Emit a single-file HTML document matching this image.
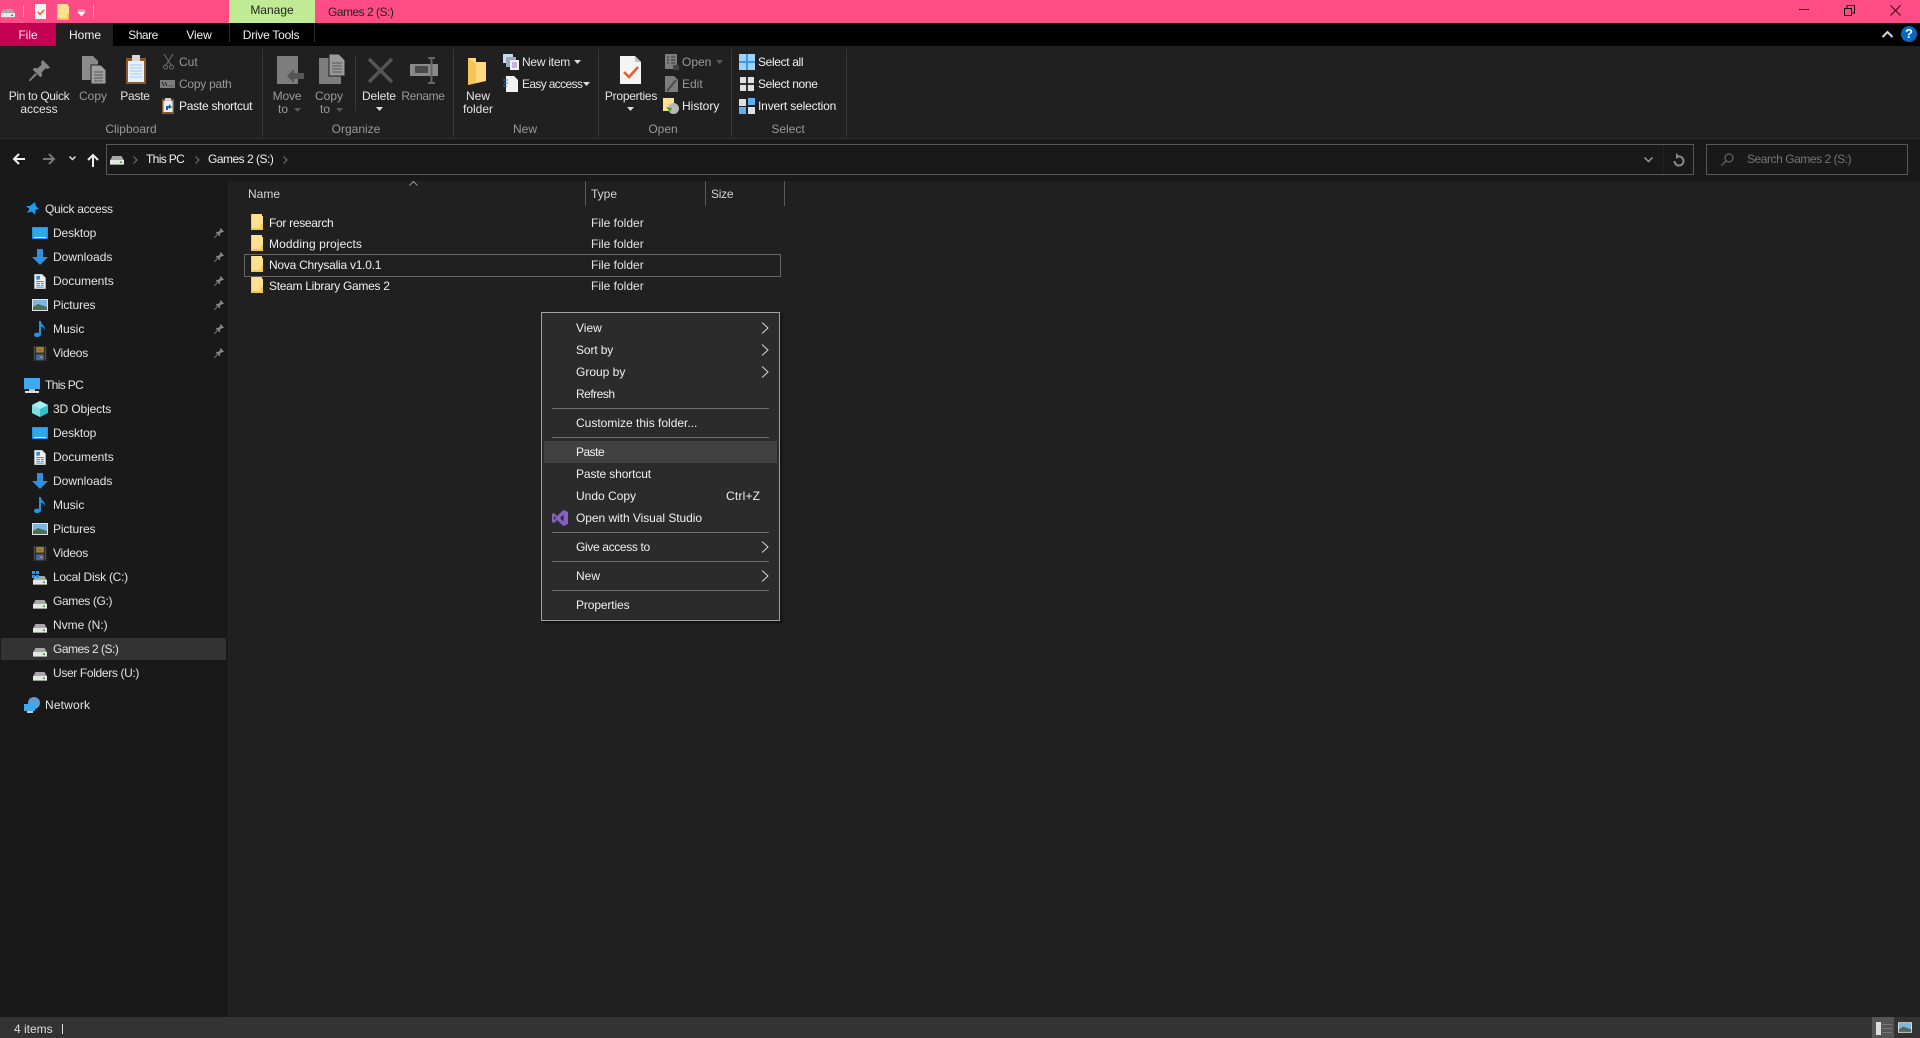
<!DOCTYPE html>
<html><head><meta charset="utf-8"><title>Games 2 (S:)</title>
<style>
html,body{margin:0;padding:0;width:1920px;height:1038px;overflow:hidden;background:#202020}
body{position:relative;font:12px/16px "Liberation Sans",sans-serif;color:#e4e4e4}
.b{position:absolute}
.t{position:absolute;white-space:nowrap;line-height:16px;height:16px}
.c{transform:translateX(-50%)}
.d{color:#9a9a9a}
.w{color:#f0f0f0}
.g{color:#999}
.a{letter-spacing:-.12px}
.e{letter-spacing:-.25px}
.f{letter-spacing:-.35px}
.h{letter-spacing:-.5px}
.i{letter-spacing:-.65px}
svg{position:absolute;overflow:visible}
</style></head><body>
<svg width="0" height="0" style="position:absolute">
<symbol id="drive" viewBox="0 0 14 9"><path d="M2.5 0H11.5L14 4.5H0z" fill="#a8a8a8"/><rect y="4" width="14" height="5" fill="#e6e6e6"/><rect y="8" width="14" height="1" fill="#9a9a9a"/><rect x="10" y="5.500" width="2" height="1.500" fill="#3c9a3c"/></symbol>
<symbol id="folder" viewBox="0 0 12 16"><path d="M0 0H11V2H12V16H0z" fill="#ffe08e"/><path d="M0 14H12V16H0zM0 0H1V16H0z" fill="#f3c851"/><path d="M10 10H12V16H10z" fill="#f3c851"/></symbol>
<symbol id="pin" viewBox="0 0 20 20"><path d="M13 0L20 7L18 8.500L15.500 8L12 12L12.500 15L11 16.500L3.500 9L5 7.500L8 8L12 4.500L11.500 2zM6 12.500L7.500 14L1 20L0 20L0 19z" fill="#858585"/></symbol>
<symbol id="desk" viewBox="0 0 16 12"><rect width="16" height="12" fill="#1e90e8"/><rect x="1" y="1" width="14" height="9" fill="#2ea5f5"/><rect x="2" y="10" width="12" height="1" fill="#d0ecff"/></symbol>
<symbol id="down" viewBox="0 0 16 16"><path d="M5 0H11V8H16L8 16L0 8H5z" fill="#2f8fe0"/></symbol>
<symbol id="doc" viewBox="0 0 12 16"><path d="M0 0H8L12 4V16H0z" fill="#f2f2f2"/><path d="M0 0H8L12 4V16H0z" fill="none" stroke="#8a8a8a" stroke-width=".8"/><rect x="2" y="2" width="4" height="4" fill="#3a8dd8"/><path d="M2 8H10M2 10H6M7 10H10M2 12H6M7 12H10M2 14H10" stroke="#3a8dd8"/></symbol>
<symbol id="pic" viewBox="0 0 16 12"><rect width="16" height="12" fill="#e4e4e4"/><rect x="1" y="1" width="14" height="10" fill="#7fb4de"/><path d="M1 8L6 5L15 8V11H1z" fill="#4a6e58"/></symbol>
<symbol id="music" viewBox="0 0 12 16"><path d="M5 0H7C7 4 12 5 11 9C10 6 8.500 6 7 5.500V13C7 15 5 16 3 16C1 16 0 15 0 14C0 12 3 11 5 12z" fill="#1e96e8"/></symbol>
<symbol id="video" viewBox="0 0 14 16"><rect width="14" height="16" fill="#2e2e2e"/><path d="M1 1V15M13 1V15" stroke="#777" stroke-dasharray="1 1"/><rect x="3" y="1" width="8" height="6" fill="#9a8a30"/><rect x="3" y="9" width="8" height="6" fill="#3f68b8"/><rect x="5" y="3" width="3" height="2" fill="#d04030"/><rect x="7" y="11" width="3" height="2" fill="#d08030"/></symbol>
<symbol id="chev" viewBox="0 0 8 12"><path d="M1 .5L7 6L1 11.500" fill="none" stroke="#d8d8d8"/></symbol>
<symbol id="arrowsm" viewBox="0 0 7 4"><path d="M0 0H7L3.500 4z" fill="currentColor"/></symbol>
<symbol id="sel" viewBox="0 0 16 16"><rect width="7" height="7"/><rect x="9" width="7" height="7"/><rect y="9" width="7" height="7"/><rect x="9" y="9" width="7" height="7"/></symbol>
</svg>

<!-- Title bar -->
<div class="b" style="left:0;top:0;width:1920px;height:23px;background:#ff4b86"></div>
<div class="b" style="left:229px;top:0;width:86px;height:23px;background:#c1ea94"></div>
<div class="t c" style="left:272px;top:2px;color:#222">Manage</div>
<div class="t h" style="left:328px;top:4px;color:#222">Games 2 (S:)</div>
<svg style="left:1px;top:9px" width="14" height="9"><use href="#drive"/></svg>
<div class="b" style="left:23px;top:5px;width:1px;height:12px;background:#ffa0c0"></div>
<div class="b" style="left:35px;top:4px;width:11px;height:15px;background:#f4f4f4"></div>
<svg style="left:37px;top:8px" width="8" height="8"><path d="M1 4L3 6.500L7 2" fill="none" stroke="#f05a1e" stroke-width="1.500"/></svg>
<svg style="left:57px;top:4px" width="12" height="16"><use href="#folder"/></svg>
<svg style="left:78px;top:10px" width="8" height="7"><path d="M0 0H7M0 2H7L3.500 6z" fill="#fff" stroke="#fff" stroke-width=".7"/></svg>
<div class="b" style="left:93px;top:5px;width:1px;height:12px;background:#ffa0c0"></div>
<svg style="left:1799px;top:9px" width="10" height="2"><rect width="10" height="1" fill="#111"/></svg>
<svg style="left:1844px;top:5px" width="11" height="11"><path d="M.5 3.500H7.500V10.500H.5zM3 3V.5H10.500V8H8" fill="none" stroke="#111"/></svg>
<svg style="left:1890px;top:5px" width="11" height="11"><path d="M.5.5L10.500 10.500M10.500.5L.5 10.500" stroke="#111" fill="none"/></svg>

<!-- Tabs -->
<div class="b" style="left:0;top:23px;width:1920px;height:23px;background:#000"></div>
<div class="b" style="left:0;top:23px;width:56px;height:23px;background:#c40050"></div>
<div class="t c w" style="left:28px;top:27px">File</div>
<div class="b" style="left:56px;top:23px;width:57px;height:24px;background:#202020"></div>
<div class="t c w" style="left:85px;top:27px">Home</div>
<div class="t c w h" style="left:143px;top:27px">Share</div>
<div class="t c w a" style="left:199px;top:27px">View</div>
<div class="t c w e" style="left:271px;top:27px">Drive Tools</div>
<div class="b" style="left:229px;top:23px;width:1px;height:19px;background:#2a2a2a"></div>
<div class="b" style="left:314px;top:23px;width:1px;height:19px;background:#2a2a2a"></div>
<svg style="left:1882px;top:31px" width="11" height="7"><path d="M.5 6L5.500 1L10.500 6" fill="none" stroke="#d8d8d8" stroke-width="2"/></svg>
<div class="b" style="left:1901px;top:26px;width:16px;height:16px;border-radius:50%;background:#0a68c4"></div>
<div class="t c" style="left:1909px;top:26px;color:#fff;font-weight:bold;font-size:13px">?</div>

<!-- Ribbon -->
<div class="b" style="left:0;top:46px;width:1920px;height:92px;background:#202020"></div>
<div class="b" style="left:0;top:138px;width:1920px;height:1px;background:#2e2e2e"></div>
<div class="b" style="left:262px;top:49px;width:1px;height:88px;background:#383838"></div>
<div class="b" style="left:453px;top:49px;width:1px;height:88px;background:#383838"></div>
<div class="b" style="left:598px;top:49px;width:1px;height:88px;background:#383838"></div>
<div class="b" style="left:731px;top:49px;width:1px;height:88px;background:#383838"></div>
<div class="b" style="left:846px;top:49px;width:1px;height:88px;background:#383838"></div>
<div class="b" style="left:355px;top:56px;width:1px;height:55px;background:#383838"></div>

<svg style="left:29px;top:60px" width="21" height="21"><use href="#pin"/></svg>
<div class="t c f" style="left:39px;top:88px">Pin to Quick</div><div class="t c" style="left:39px;top:101px">access</div>
<svg style="left:82px;top:56px" width="25" height="28"><path d="M0 0H11L16 5V24H0z" fill="#8a8a8a"/><path d="M9 9H19L24 14V28H9z" fill="#a0a0a0" stroke="#202020"/><path d="M12 16H21M12 19H21M12 22H21M12 25H21" stroke="#555"/></svg>
<div class="t c d" style="left:93px;top:88px">Copy</div>
<svg style="left:126px;top:55px" width="20" height="29"><rect y="3" width="20" height="26" fill="#8a5a30"/><rect x="2" y="6" width="16" height="21" fill="#e8f0fa"/><path d="M4 10H16M4 13H16M4 16H16M4 19H16M4 22H16" stroke="#a8c8e8"/><rect x="6" y="0" width="8" height="6" fill="#d8d8d8"/></svg>
<div class="t c e" style="left:135px;top:88px">Paste</div>
<svg style="left:163px;top:54px" width="11" height="16"><path d="M1 0L8 11M10 0L3 11" stroke="#707070" fill="none"/><circle cx="2.500" cy="13" r="2" fill="none" stroke="#707070"/><circle cx="8.500" cy="13" r="2" fill="none" stroke="#707070"/></svg>
<div class="t d" style="left:179px;top:54px">Cut</div>
<svg style="left:160px;top:80px" width="15" height="8"><rect width="15" height="8" fill="#7d7d7d"/><path d="M2 2L4 6M5 2L7 6M9 6H10M11.500 6H12.500" stroke="#222"/></svg>
<div class="t d e" style="left:179px;top:76px">Copy path</div>
<svg style="left:162px;top:98px" width="12" height="16"><rect y="1" width="12" height="15" rx="1" fill="#8a5a30"/><rect x="1.500" y="3" width="9" height="11" fill="#e8eef6"/><rect x="3" width="6" height="3" fill="#ccc"/><path d="M4 12V8H7V6L10 9L7 11V10H6V12z" fill="#1a5fb8"/></svg>
<div class="t w e" style="left:179px;top:98px">Paste shortcut</div>
<div class="t c g" style="left:131px;top:121px">Clipboard</div>

<svg style="left:277px;top:56px" width="27" height="28"><rect width="21" height="28" fill="#7d7d7d"/><path d="M10 20L17 13V17H27V23H17V27z" fill="#565656"/></svg>
<div class="t c d a" style="left:287px;top:88px">Move</div><div class="t d" style="left:278px;top:101px">to</div>
<svg style="left:294px;top:108px;color:#5a5a5a" width="7" height="4"><use href="#arrowsm"/></svg>
<svg style="left:319px;top:54px" width="27" height="30"><rect y="4" width="22" height="26" fill="#7d7d7d"/><path d="M10 0H20L26 6V22H10z" fill="#9a9a9a" stroke="#202020"/><path d="M13 9H23M13 12H23M13 15H23M13 18H23" stroke="#555"/></svg>
<div class="t c d" style="left:329px;top:88px">Copy</div><div class="t d" style="left:320px;top:101px">to</div>
<svg style="left:336px;top:108px;color:#5a5a5a" width="7" height="4"><use href="#arrowsm"/></svg>
<svg style="left:368px;top:58px" width="25" height="25"><path d="M1 1L24 24M24 1L1 24" stroke="#555" stroke-width="3.500"/></svg>
<div class="t c a" style="left:379px;top:88px">Delete</div>
<svg style="left:376px;top:107px;color:#ddd" width="7" height="4"><use href="#arrowsm"/></svg>
<svg style="left:410px;top:57px" width="28" height="27"><rect y="7" width="28" height="12" fill="#8a8a8a"/><rect x="5" y="9" width="13" height="7" fill="#4a4a4a"/><path d="M18 1H25M21.500 1V26M18 26H25" stroke="#666" stroke-width="2" fill="none"/></svg>
<div class="t c d f" style="left:423px;top:88px">Rename</div>
<div class="t c g" style="left:356px;top:121px">Organize</div>

<svg style="left:468px;top:58px" width="18" height="27"><path d="M0 0H8V4H18V23L0 27z" fill="#ffd880"/><path d="M0 0L8 6V24L0 27z" fill="#f5c452"/></svg>
<div class="t c" style="left:478px;top:88px">New</div><div class="t c" style="left:478px;top:101px">folder</div>
<svg style="left:503px;top:54px" width="16" height="16"><rect width="10" height="9" fill="#c8dcf0"/><rect x="3" y="3" width="10" height="10" fill="#9ab"/><rect x="7" y="6" width="9" height="10" fill="#f2f2f2"/><path d="M9 9H14M9 11H14M9 13H14" stroke="#a070c0"/></svg>
<div class="t e" style="left:522px;top:54px">New item</div>
<svg style="left:574px;top:60px;color:#ddd" width="7" height="4"><use href="#arrowsm"/></svg>
<svg style="left:503px;top:76px" width="15" height="16"><path d="M3 0H11L15 4V16H3z" fill="#f2f2f2"/><path d="M0 4H5M1 7H5M0 10H4" stroke="#2f7fd0"/></svg>
<div class="t i" style="left:522px;top:76px">Easy access</div>
<svg style="left:583px;top:82px;color:#ddd" width="7" height="4"><use href="#arrowsm"/></svg>
<div class="t c g" style="left:525px;top:121px">New</div>

<svg style="left:620px;top:56px" width="21" height="28"><path d="M0 0H15L21 6V28H0z" fill="#f4f4f4"/><path d="M15 0L21 6H15z" fill="#c0c0c0"/><path d="M4 16L9 21L18 11" fill="none" stroke="#f05a1e" stroke-width="2.500"/></svg>
<div class="t c e" style="left:631px;top:88px">Properties</div>
<svg style="left:627px;top:107px;color:#ddd" width="7" height="4"><use href="#arrowsm"/></svg>
<svg style="left:665px;top:54px" width="14" height="16"><rect width="12" height="15" fill="#7d7d7d"/><path d="M2 3H4M6 3H10M2 6H4M6 6H10M2 9H4M6 9H10" stroke="#333"/><path d="M8 11H14V16H8z" fill="#444"/></svg>
<div class="t d" style="left:682px;top:54px">Open</div>
<svg style="left:716px;top:60px;color:#5a5a5a" width="7" height="4"><use href="#arrowsm"/></svg>
<svg style="left:665px;top:76px" width="13" height="16"><path d="M0 0H9L13 4V16H0z" fill="#7d7d7d"/><path d="M2 15L11 4" stroke="#4a4a4a" stroke-width="2"/></svg>
<div class="t d" style="left:682px;top:76px">Edit</div>
<svg style="left:663px;top:98px" width="16" height="16"><rect width="11" height="13" fill="#ffe08e"/><circle cx="10.500" cy="10.500" r="5.500" fill="#b8b8b8"/><path d="M3 9L7 14L9 10z" fill="#38a038"/></svg>
<div class="t w" style="left:682px;top:98px">History</div>
<div class="t c g" style="left:663px;top:121px">Open</div>

<svg style="left:739px;top:54px;fill:#9ed2f8" width="16" height="16"><rect width="16" height="16" fill="#3c9be8"/><use href="#sel"/></svg>
<div class="t w f" style="left:758px;top:54px">Select all</div>
<svg style="left:740px;top:77px;fill:#e0e0e0" width="14" height="14"><use href="#sel"/></svg>
<div class="t w f" style="left:758px;top:76px">Select none</div>
<svg style="left:739px;top:98px" width="16" height="16"><rect x="0" y="1" width="7" height="7" fill="#e0e0e0"/><rect x="9" y="0" width="7" height="7" fill="#5fb0f0"/><rect y="9" width="7" height="7" fill="#5fb0f0"/><rect x="9" y="9" width="7" height="7" fill="#e0e0e0"/></svg>
<div class="t w a" style="left:758px;top:98px;letter-spacing:-.16px">Invert selection</div>
<div class="t c g" style="left:788px;top:121px">Select</div>

<!-- Address row -->
<div class="b" style="left:0;top:139px;width:1920px;height:42px;background:#191919"></div>
<svg style="left:13px;top:153px" width="12" height="12"><path d="M6 1L1 6L6 11M1 6H12" fill="none" stroke="#f0f0f0" stroke-width="2"/></svg>
<svg style="left:43px;top:153px" width="12" height="12"><path d="M6 1L11 6L6 11M0 6H11" fill="none" stroke="#777" stroke-width="2"/></svg>
<svg style="left:69px;top:156px" width="7" height="5"><path d="M.5.5L3.500 3.500L6.500.5" fill="none" stroke="#ddd" stroke-width="1.500"/></svg>
<svg style="left:87px;top:154px" width="12" height="13"><path d="M1 6L6 1L11 6M6 1V13" fill="none" stroke="#f0f0f0" stroke-width="2"/></svg>
<div class="b" style="left:106px;top:144px;width:1586px;height:29px;border:1px solid #585858"></div>
<svg style="left:110px;top:156px" width="14" height="9"><use href="#drive"/></svg>
<svg style="left:133px;top:156px" width="5" height="8"><path d="M.5.5L4 4L.5 7.500" fill="none" stroke="#777"/></svg>
<div class="t w i" style="left:146px;top:151px">This PC</div>
<svg style="left:195px;top:156px" width="5" height="8"><path d="M.5.5L4 4L.5 7.500" fill="none" stroke="#777"/></svg>
<div class="t w h" style="left:208px;top:151px">Games 2 (S:)</div>
<svg style="left:283px;top:156px" width="5" height="8"><path d="M.5.5L4 4L.5 7.500" fill="none" stroke="#777"/></svg>
<svg style="left:1644px;top:157px" width="9" height="6"><path d="M.5.5L4.500 4.500L8.500.5" fill="none" stroke="#999" stroke-width="1.500"/></svg>
<div class="b" style="left:1663px;top:145px;width:1px;height:28px;background:#222"></div>
<svg style="left:1673px;top:153px" width="12" height="13"><path d="M6 3.500A4.500 4.500 0 1 1 1.500 8" fill="none" stroke="#8a8a8a" stroke-width="2"/><path d="M3 0L7 3.500L3 6z" fill="#8a8a8a"/></svg>
<div class="b" style="left:1706px;top:144px;width:200px;height:29px;border:1px solid #585858"></div>
<svg style="left:1721px;top:153px" width="13" height="13"><circle cx="8" cy="5" r="4" fill="none" stroke="#777"/><path d="M5 8L.5 12.500" stroke="#777"/></svg>
<div class="t" style="left:1747px;top:151px;color:#757575;letter-spacing:-.45px">Search Games 2 (S:)</div>

<!-- Nav -->
<div class="b" style="left:0;top:181px;width:228px;height:836px;background:#191919"></div>
<div class="b" style="left:228px;top:181px;width:1px;height:836px;background:#262626"></div>
<div class="b" style="left:1px;top:638px;width:225px;height:22px;background:#333"></div>
<svg style="left:26px;top:202px" width="13" height="13"><path d="M9 0L10 4.500L13 6.500L9.500 8L9 13L6 9.500L1 11L3.500 7L0 4H4z" fill="#1e9cf0"/></svg>
<div class="t f" style="left:45px;top:201px;letter-spacing:-.3px">Quick access</div>
<svg style="left:32px;top:227px" width="16" height="12"><use href="#desk"/></svg><div class="t a" style="left:53px;top:225px">Desktop</div>
<svg style="left:32px;top:249px" width="16" height="16"><use href="#down"/></svg><div class="t" style="left:53px;top:249px">Downloads</div>
<svg style="left:34px;top:274px" width="12" height="15"><use href="#doc"/></svg><div class="t" style="left:53px;top:273px">Documents</div>
<svg style="left:32px;top:299px" width="16" height="12"><use href="#pic"/></svg><div class="t a" style="left:53px;top:297px">Pictures</div>
<svg style="left:34px;top:321px" width="12" height="16"><use href="#music"/></svg><div class="t" style="left:53px;top:321px">Music</div>
<svg style="left:33px;top:346px" width="14" height="15"><use href="#video"/></svg><div class="t e" style="left:53px;top:345px">Videos</div>
<svg style="left:214px;top:228px" width="10" height="10"><use href="#pin"/></svg>
<svg style="left:214px;top:252px" width="10" height="10"><use href="#pin"/></svg>
<svg style="left:214px;top:276px" width="10" height="10"><use href="#pin"/></svg>
<svg style="left:214px;top:300px" width="10" height="10"><use href="#pin"/></svg>
<svg style="left:214px;top:324px" width="10" height="10"><use href="#pin"/></svg>
<svg style="left:214px;top:348px" width="10" height="10"><use href="#pin"/></svg>

<svg style="left:24px;top:378px" width="16" height="15"><rect width="16" height="11" fill="#3fa9f0"/><rect x="5" y="11" width="6" height="2" fill="#bbb"/><rect x="1" y="13" width="14" height="2" fill="#ddd"/></svg>
<div class="t i" style="left:45px;top:377px">This PC</div>
<svg style="left:32px;top:401px" width="16" height="16"><path d="M8 0L16 4V12L8 16L0 12V4z" fill="#35c0cc"/><path d="M8 0L16 4L8 8L0 4z" fill="#a8eef0"/><path d="M0 4L8 8V16L0 12z" fill="#7fe0e4"/></svg><div class="t a" style="left:53px;top:401px">3D Objects</div>
<svg style="left:32px;top:427px" width="16" height="12"><use href="#desk"/></svg><div class="t a" style="left:53px;top:425px">Desktop</div>
<svg style="left:34px;top:450px" width="12" height="15"><use href="#doc"/></svg><div class="t" style="left:53px;top:449px">Documents</div>
<svg style="left:32px;top:473px" width="16" height="16"><use href="#down"/></svg><div class="t" style="left:53px;top:473px">Downloads</div>
<svg style="left:34px;top:497px" width="12" height="16"><use href="#music"/></svg><div class="t" style="left:53px;top:497px">Music</div>
<svg style="left:32px;top:523px" width="16" height="12"><use href="#pic"/></svg><div class="t a" style="left:53px;top:521px">Pictures</div>
<svg style="left:33px;top:546px" width="14" height="15"><use href="#video"/></svg><div class="t e" style="left:53px;top:545px">Videos</div>
<svg style="left:33px;top:576px" width="14" height="9"><use href="#drive"/></svg>
<svg style="left:32px;top:571px" width="7" height="7"><rect width="3" height="3" fill="#1e9cf0"/><rect x="4" width="3" height="3" fill="#1e9cf0"/><rect y="4" width="3" height="3" fill="#1e9cf0"/><rect x="4" y="4" width="3" height="3" fill="#1e9cf0"/></svg>
<div class="t e" style="left:53px;top:569px">Local Disk (C:)</div>
<svg style="left:33px;top:600px" width="14" height="9"><use href="#drive"/></svg><div class="t f" style="left:53px;top:593px">Games (G:)</div>
<svg style="left:33px;top:624px" width="14" height="9"><use href="#drive"/></svg><div class="t" style="left:53px;top:617px">Nvme (N:)</div>
<svg style="left:33px;top:648px" width="14" height="9"><use href="#drive"/></svg><div class="t h" style="left:53px;top:641px">Games 2 (S:)</div>
<svg style="left:33px;top:672px" width="14" height="9"><use href="#drive"/></svg><div class="t f" style="left:53px;top:665px">User Folders (U:)</div>
<svg style="left:24px;top:697px" width="17" height="16"><circle cx="10" cy="6" r="6" fill="#5a9fd8"/><rect y="7" width="11" height="7" fill="#3fa9f0"/><rect x="3" y="14" width="6" height="2" fill="#ccc"/></svg>
<div class="t" style="left:45px;top:697px;letter-spacing:.17px">Network</div>

<!-- Column headers -->
<svg style="left:409px;top:181px" width="9" height="5"><path d="M.5 4.500L4.500.5L8.500 4.500" fill="none" stroke="#999"/></svg>
<div class="t" style="left:248px;top:186px;color:#d4d4d4">Name</div>
<div class="t" style="left:591px;top:186px;color:#d4d4d4">Type</div>
<div class="t e" style="left:711px;top:186px;color:#d4d4d4">Size</div>
<div class="b" style="left:585px;top:181px;width:1px;height:25px;background:#5a5a5a"></div>
<div class="b" style="left:705px;top:181px;width:1px;height:25px;background:#5a5a5a"></div>
<div class="b" style="left:784px;top:181px;width:1px;height:25px;background:#5a5a5a"></div>

<!-- Files -->
<div class="b" style="left:244px;top:254px;width:535px;height:21px;border:1px solid #666"></div>
<svg style="left:251px;top:214px" width="12" height="16"><use href="#folder"/></svg>
<div class="t w" style="left:269px;top:215px;letter-spacing:-.3px">For research</div><div class="t" style="left:591px;top:215px">File folder</div>
<svg style="left:251px;top:235px" width="12" height="16"><use href="#folder"/></svg>
<div class="t w" style="left:269px;top:236px;letter-spacing:.1px">Modding projects</div><div class="t" style="left:591px;top:236px">File folder</div>
<svg style="left:251px;top:256px" width="12" height="16"><use href="#folder"/></svg>
<div class="t w e" style="left:269px;top:257px">Nova Chrysalia v1.0.1</div><div class="t" style="left:591px;top:257px">File folder</div>
<svg style="left:251px;top:277px" width="12" height="16"><use href="#folder"/></svg>
<div class="t w" style="left:269px;top:278px;letter-spacing:-.29px">Steam Library Games 2</div><div class="t" style="left:591px;top:278px">File folder</div>

<!-- Context menu -->
<div class="b" style="left:541px;top:312px;width:237px;height:307px;background:#2b2b2b;border:1px solid #a0a0a0;box-shadow:2px 2px 3px rgba(0,0,0,.45)"></div>
<div class="b" style="left:544px;top:441px;width:233px;height:22px;background:#414141"></div>
<div class="t w" style="left:576px;top:320px">View</div>
<div class="t w a" style="left:576px;top:342px">Sort by</div>
<div class="t w" style="left:576px;top:364px">Group by</div>
<div class="t w h" style="left:576px;top:386px">Refresh</div>
<div class="b" style="left:552px;top:408px;width:217px;height:1px;background:#707070"></div>
<div class="t w" style="left:576px;top:415px">Customize this folder...</div>
<div class="b" style="left:552px;top:437px;width:217px;height:1px;background:#707070"></div>
<div class="t w h" style="left:576px;top:444px">Paste</div>
<div class="t w a" style="left:576px;top:466px">Paste shortcut</div>
<div class="t w" style="left:576px;top:488px">Undo Copy</div>
<div class="t w" style="left:726px;top:488px;letter-spacing:.2px">Ctrl+Z</div>
<svg style="left:552px;top:510px" width="16" height="16"><path d="M11.500 0L16 2V14L11.500 16L5 10L2 13L0 12V4L2 3L5 6zM11.500 4.500L8 8L11.500 11.500zM2 6V10L4 8z" fill="#8661c5" fill-rule="evenodd"/></svg>
<div class="t w" style="left:576px;top:510px;letter-spacing:-.05px">Open with Visual Studio</div>
<div class="b" style="left:552px;top:532px;width:217px;height:1px;background:#707070"></div>
<div class="t w f" style="left:576px;top:539px">Give access to</div>
<div class="b" style="left:552px;top:561px;width:217px;height:1px;background:#707070"></div>
<div class="t w" style="left:576px;top:568px">New</div>
<div class="b" style="left:552px;top:590px;width:217px;height:1px;background:#707070"></div>
<div class="t w a" style="left:576px;top:597px">Properties</div>
<svg style="left:761px;top:322px" width="8" height="12"><use href="#chev"/></svg>
<svg style="left:761px;top:344px" width="8" height="12"><use href="#chev"/></svg>
<svg style="left:761px;top:366px" width="8" height="12"><use href="#chev"/></svg>
<svg style="left:761px;top:541px" width="8" height="12"><use href="#chev"/></svg>
<svg style="left:761px;top:570px" width="8" height="12"><use href="#chev"/></svg>

<!-- Status bar -->
<div class="b" style="left:0;top:1017px;width:1920px;height:21px;background:#333"></div>
<div class="t" style="left:14px;top:1021px;color:#dcdcdc">4 items</div>
<div class="b" style="left:62px;top:1024px;width:1px;height:10px;background:#e0e0e0"></div>
<div class="b" style="left:1872px;top:1017px;width:22px;height:21px;background:#555"></div>
<div class="b" style="left:1876px;top:1022px;width:5px;height:13px;background:#ddd"></div>
<div class="b" style="left:1882px;top:1024px;width:10px;height:1px;background:#777"></div>
<div class="b" style="left:1882px;top:1028px;width:10px;height:1px;background:#777"></div>
<div class="b" style="left:1882px;top:1032px;width:10px;height:1px;background:#777"></div>
<svg style="left:1898px;top:1022px" width="14" height="11"><use href="#pic"/></svg>
</body></html>
